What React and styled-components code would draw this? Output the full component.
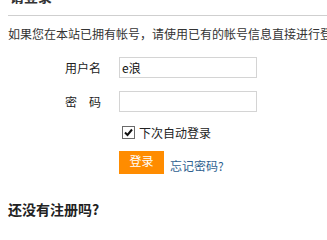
import React from "react";
import styled, { createGlobalStyle } from "styled-components";

const Global = createGlobalStyle`
  html, body { margin: 0; padding: 0; background: #fff; }
  body { font-family: "Noto Sans CJK SC", "Liberation Sans", sans-serif; color: #333; font-size: 12px; overflow: hidden; }
`;

const Page = styled.div`
  padding: 0 0 0 8px;
  width: 327px;
  box-sizing: border-box;
  overflow: hidden;
`;

const Title = styled.h2`
  margin: -12px 0 0 2px;
  height: 16px;
  line-height: 16px;
  font-size: 14px;
  font-weight: bold;
  color: #333;
`;

const Rule = styled.div`
  height: 1px;
  background: #cfcfcf;
  margin-top: 11px;
  margin-right: -10px;
`;

const Intro = styled.p`
  margin: 7px 0 0 0;
  line-height: 22px;
  font-size: 12px;
  white-space: nowrap;
  color: #333;
`;

const Form = styled.form`
  margin: 12px 0 0 57px;
  display: flex;
  flex-direction: column;
`;

const Row = styled.div`
  display: flex;
  align-items: center;
  height: ${(p) => p.$h ?? 21}px;
  margin-bottom: ${(p) => p.$gap ?? 13}px;
  padding-left: ${(p) => p.$indent ?? 0}px;
`;

const Label = styled.label`
  width: 36px;
  margin-right: 18px;
  font-size: 12px;
  color: #222;
  white-space: nowrap;
`;

const Field = styled.input`
  width: 138px;
  height: 21px;
  box-sizing: border-box;
  border: 1px solid #d4d4d4;
  padding: 0 2px;
  font-family: "Noto Sans CJK SC", "Liberation Sans", sans-serif;
  font-size: 12px;
  color: #111;
  outline: none;
`;

const CheckLabel = styled.label`
  display: flex;
  align-items: center;
  gap: 4px;
  font-size: 12px;
  color: #222;
`;

const Box = styled.span`
  width: 11px;
  height: 11px;
  border: 1px solid #6a6a6a;
  background: #fff;
  display: flex;
  align-items: center;
  justify-content: center;
`;

const Actions = styled.div`
  display: flex;
  align-items: flex-end;
  gap: 6px;
  padding-left: 54px;
`;

const Submit = styled.button`
  width: 45px;
  height: 23px;
  border: none;
  padding: 0 0 4px 0;
  background: #ff8c00;
  color: #fff;
  font-family: "Noto Sans CJK SC", "Liberation Sans", sans-serif;
  font-size: 12px;
  cursor: pointer;
`;

const Forgot = styled.a`
  color: #2f5f8f;
  font-size: 12px;
  text-decoration: none;
  line-height: 16px;
`;

const SubTitle = styled.h3`
  margin: 26px 0 0 0;
  font-size: 14px;
  font-weight: bold;
  color: #222;
  line-height: 18px;
`;

export default function App() {
  return (
    <>
      <Global />
      <Page>
        <Title>请登录</Title>
        <Rule />
        <Intro>如果您在本站已拥有帐号，请使用已有的帐号信息直接进行登录</Intro>
        <Form onSubmit={(e) => e.preventDefault()}>
          <Row>
            <Label>用户名</Label>
            <Field defaultValue="e浪" />
          </Row>
          <Row $gap={14}>
            <Label>密　码</Label>
            <Field type="password" />
          </Row>
          <Row $indent={57} $gap={12} $h={13}>
            <CheckLabel>
              <Box>
                <svg width="9" height="9" viewBox="0 0 9 9">
                  <path d="M1 4.5 L3.5 7 L8 1.5" fill="none" stroke="#111" strokeWidth="2" />
                </svg>
              </Box>
              下次自动登录
            </CheckLabel>
          </Row>
          <Actions>
            <Submit type="submit">登录</Submit>
            <Forgot href="#">忘记密码?</Forgot>
          </Actions>
        </Form>
        <SubTitle>还没有注册吗?</SubTitle>
      </Page>
    </>
  );
}
